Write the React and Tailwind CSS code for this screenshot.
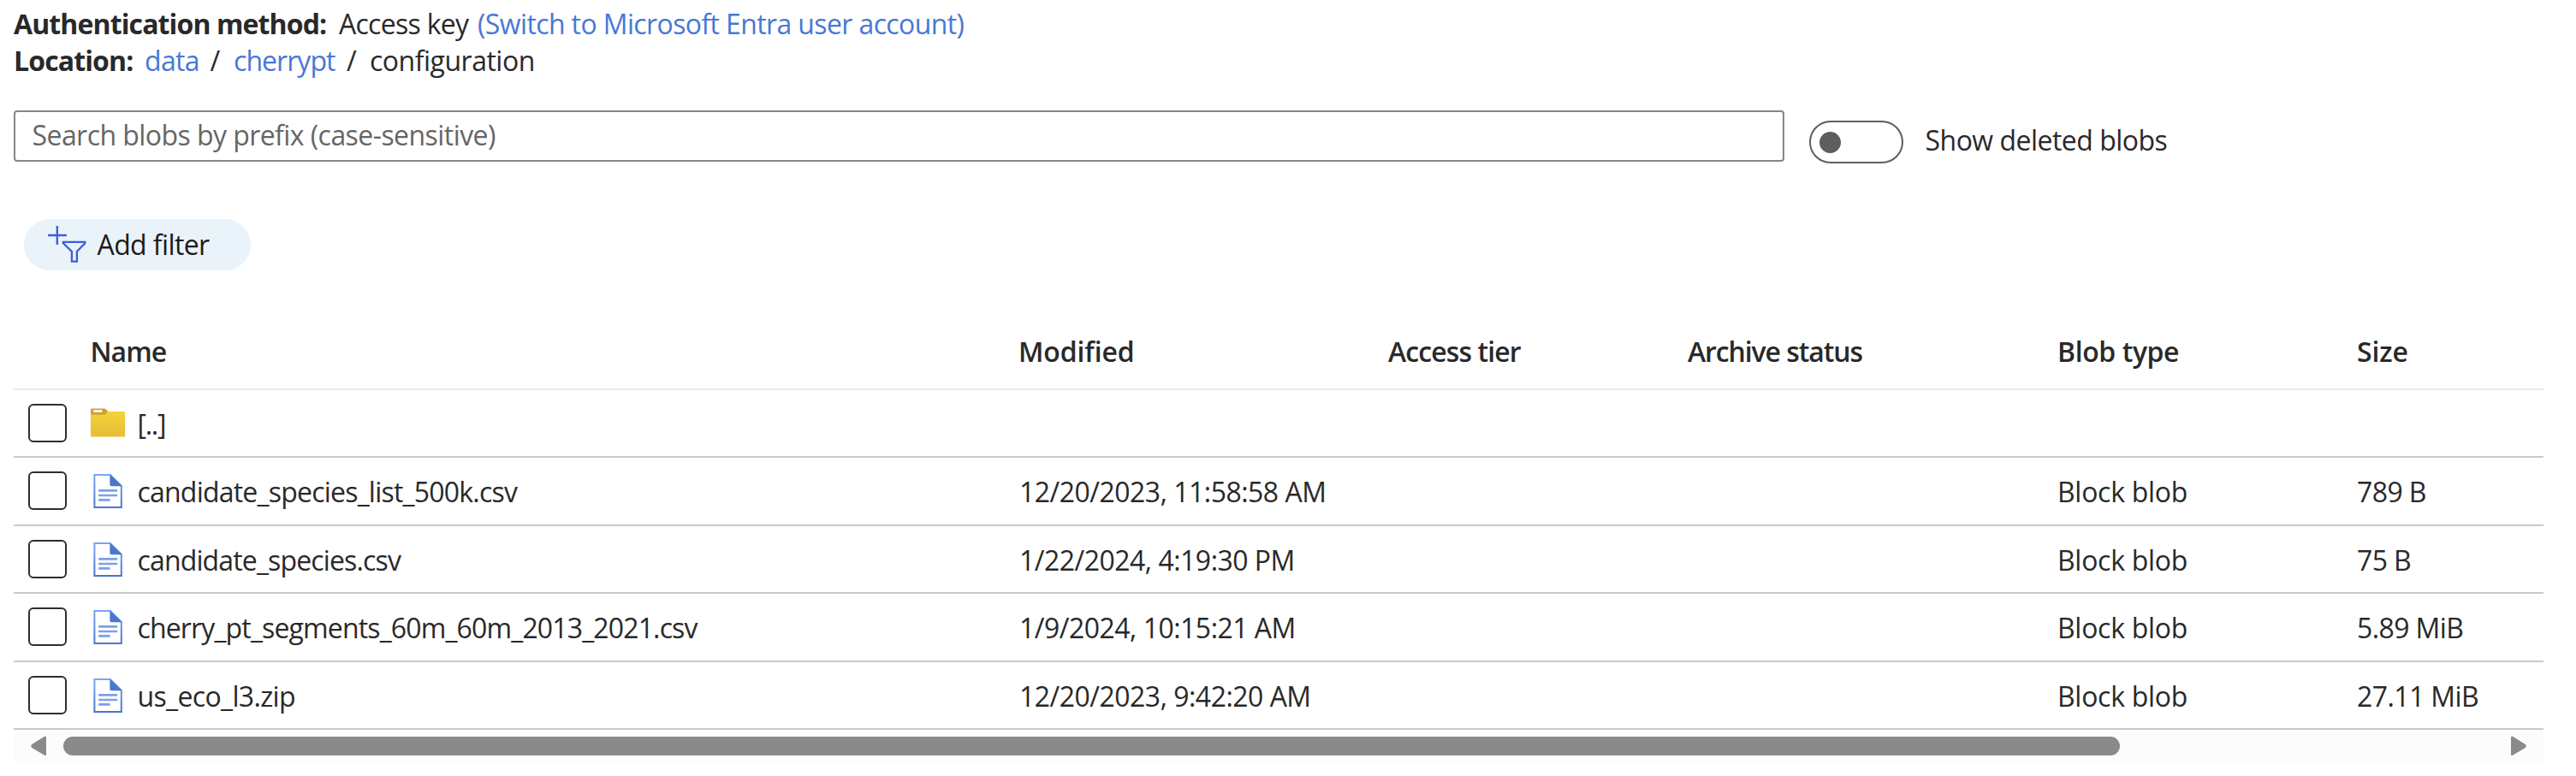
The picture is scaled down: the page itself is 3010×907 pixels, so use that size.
import React from "react";

const rows = [
  { folder: true, name: "[..]", track: "tracking-[-1.29px]" },
  {
    name: "candidate_species_list_500k.csv",
    track: "tracking-[-0.79px]",
    modified: "12/20/2023, 11:58:58 AM",
    type: "Block blob",
    size: "789 B",
  },
  {
    name: "candidate_species.csv",
    track: "tracking-[-0.857px]",
    modified: "1/22/2024, 4:19:30 PM",
    type: "Block blob",
    size: "75 B",
  },
  {
    name: "cherry_pt_segments_60m_60m_2013_2021.csv",
    track: "tracking-[-0.858px]",
    modified: "1/9/2024, 10:15:21 AM",
    type: "Block blob",
    size: "5.89 MiB",
  },
  {
    name: "us_eco_l3.zip",
    track: "tracking-[-0.65px]",
    modified: "12/20/2023, 9:42:20 AM",
    type: "Block blob",
    size: "27.11 MiB",
  },
];

const rowHeights = ["h-[79px]", "h-[80px]", "h-[79px]", "h-[80px]", "h-[79px]"];

const columns =
  "grid grid-cols-[89px_1085px_432px_350px_432px_350px_1fr]";

function AddFilterIcon() {
  return (
    <svg className="h-[44px] w-[46px] shrink-0" viewBox="0 0 46 44" fill="none" stroke="#3b5fdb" strokeWidth="2.3">
      <path d="M10.8 0v22M-0.5 11h22.4" />
      <path d="M17.9 18.9h25.4v1.4l-9.4 9.7v11.7h-6V30l-10-9.7z" />
    </svg>
  );
}

function FolderIcon() {
  return (
    <svg className="h-[40px] w-[40px] shrink-0" viewBox="0 0 40 40">
      <defs>
        <linearGradient id="folder" x1="0" y1="0" x2="0" y2="1">
          <stop offset="0" stopColor="#f0d43a" />
          <stop offset="1" stopColor="#e8bd35" />
        </linearGradient>
      </defs>
      <path d="M0 6h40v29.3H0z" fill="url(#folder)" />
      <path d="M0 35h40v1H0z" fill="#f3dfa0" />
      <path d="M0 3.2Q0 2.4 1 2.4h15.5l3.7 3.4-3.2 4H0z" fill="#cfa22f" />
      <path d="M3.2 4.2h10.2v2.6H3.2z" fill="#fff" />
    </svg>
  );
}

function FileIcon() {
  return (
    <svg className="h-[40px] w-[40px] shrink-0" viewBox="0 0 40 40" fill="none">
      <defs>
        <linearGradient id="sheet" x1="0" y1="0" x2="0" y2="1">
          <stop offset="0" stopColor="#7ea4f0" />
          <stop offset="1" stopColor="#4a76d0" />
        </linearGradient>
      </defs>
      <path d="M4.4 1h18.4l13 13v25H4.4z" fill="#fff" stroke="url(#sheet)" strokeWidth="2" />
      <path d="M22.4 0.4 36.7 14.2H24.4q-2 0-2-2z" fill="#4a76d0" />
      <path d="M10.2 19.4h19.8M10.2 25h19.8M10.2 30.4h11.4" stroke="#7ea0ea" strokeWidth="2.7" strokeLinecap="round" />
    </svg>
  );
}

function HeaderCell({ className, children }) {
  return <div className={`pt-[18px] font-semibold ${className}`}>{children}</div>;
}

function Row({ row, height }) {
  return (
    <div className={`${columns} ${height} border-b-2 border-[#cacaca]`}>
      <div className="pt-[16px] pl-[17px]">
        <div className="h-[45px] w-[45px] rounded-[6px] border-2 border-[#2e2e2e] bg-white" />
      </div>
      <div className="flex items-start pl-px">
        <div className="pt-[19px]">{row.folder ? <FolderIcon /> : <FileIcon />}</div>
        <div className={`mt-[18px] ml-[14.5px] ${row.track}`}>{row.name}</div>
      </div>
      <div className="pt-[18px] pl-px tracking-[-0.52px]">{row.modified}</div>
      <div />
      <div />
      <div className="pt-[18px] tracking-[-0.3px]">{row.type}</div>
      <div className="pt-[18px] tracking-[-0.6px]">{row.size}</div>
    </div>
  );
}

export default function App() {
  return (
    <div className="flex h-[907px] w-[3010px] flex-col overflow-hidden bg-white pr-[38px] pl-[16px] font-['Open_Sans','Noto_Sans',sans-serif] text-[32px] leading-[44px] whitespace-nowrap text-[#292929]">
      <div className="flex pt-[6px] leading-[43px]">
        <span className="w-[380px] font-bold tracking-[-0.88px]">Authentication method:</span>
        <span className="w-[162px] tracking-[-0.72px]">Access key</span>
        <a className="tracking-[-0.617px] text-[#4878d6]">(Switch to Microsoft Entra user account)</a>
      </div>
      <div className="flex leading-[43px]">
        <span className="w-[153px] font-bold tracking-[-0.88px]">Location:</span>
        <a className="w-[76.5px] tracking-[-0.69px] text-[#4878d6]">data</a>
        <span className="w-[27.5px]">/</span>
        <a className="w-[132px] tracking-[-0.95px] text-[#4878d6]">cherrypt</a>
        <span className="w-[27px]">/</span>
        <span className="tracking-[-0.495px]">configuration</span>
      </div>

      <div className="mt-[37px] flex">
        <div className="flex h-[60px] w-[2069px] items-center rounded-[4px] border-2 border-[#868686] pb-[2px] pl-[19.5px] tracking-[-0.561px] text-[#666]">
          Search blobs by prefix (case-sensitive)
        </div>
        <div className="mt-[12px] ml-[29px] flex h-[50px] w-[110px] items-center rounded-full border-2 border-[#605e5c] pt-px pl-[10px]">
          <div className="h-[25px] w-[25px] rounded-full bg-[#605e5c]" />
        </div>
        <div className="mt-[13px] ml-[25.5px] tracking-[-0.516px]">Show deleted blobs</div>
      </div>

      <div className="mt-[65px] ml-[12px] flex h-[60px] w-[265px] items-center rounded-full bg-[#eaf2fa] pl-[27.5px] text-[#1b1b1b]">
        <AddFilterIcon />
        <span className="ml-[12px] tracking-[-0.6px]">Add filter</span>
      </div>

      <div className={`${columns} mt-[55px] h-[85px] border-b-2 border-[#eaeaea]`}>
        <div />
        <HeaderCell className="pl-[0.5px] tracking-[-0.95px]">Name</HeaderCell>
        <HeaderCell className="tracking-[-0.14px]">Modified</HeaderCell>
        <HeaderCell className="tracking-[-0.9px]">Access tier</HeaderCell>
        <HeaderCell className="tracking-[-1.1px]">Archive status</HeaderCell>
        <HeaderCell className="tracking-[-0.42px]">Blob type</HeaderCell>
        <HeaderCell className="tracking-[-0.11px]">Size</HeaderCell>
      </div>
      {rows.map((row, i) => (
        <Row key={row.name} row={row} height={rowHeights[i]} />
      ))}

      <div className="flex h-[38px] items-center bg-[#fcfcfc] pr-[20px] pl-[20px]">
        <svg className="h-[24px] w-[18px]" viewBox="0 0 18 24" fill="#8a8a8a">
          <path d="M18 2.2v19.4q0 2.6-2.4.9L1.2 14Q-.6 12 1.2 10L15.6 1.1Q18-.4 18 2.2z" />
        </svg>
        <div className="ml-[20px] h-[22px] w-[2403px] rounded-full bg-[#8a8a8a]" />
        <svg className="ml-auto h-[24px] w-[18px]" viewBox="0 0 18 24" fill="#8a8a8a">
          <path d="M0 2.2v19.4q0 2.6 2.4.9L16.8 14q1.8-2 0-4L2.4 1.1Q0-.4 0 2.2z" />
        </svg>
      </div>
    </div>
  );
}
